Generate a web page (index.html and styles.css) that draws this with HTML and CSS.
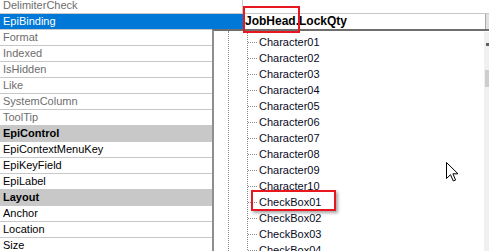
FILE: index.html
```html
<!DOCTYPE html>
<html lang="en">
<head>
    <meta charset="UTF-8">
    <title>Property Grid - EpiBinding</title>
    <link rel="stylesheet" href="styles.css">
</head>
<body>
    <div class="screen">
        <div class="grid">
            <div class="row dim"><div class="name">DelimiterCheck</div><div class="value"></div></div>
            <div class="row selected">
                <div class="name">EpiBinding</div>
                <div class="value edit"><span class="edit-text">JobHead.LockQty</span><span class="drop-btn"></span></div>
            </div>
            <div class="row dim"><div class="name">Format</div><div class="value"></div></div>
            <div class="row dim"><div class="name">Indexed</div><div class="value"></div></div>
            <div class="row dim"><div class="name">IsHidden</div><div class="value"></div></div>
            <div class="row dim"><div class="name">Like</div><div class="value"></div></div>
            <div class="row dim"><div class="name">SystemColumn</div><div class="value"></div></div>
            <div class="row dim"><div class="name">ToolTip</div><div class="value"></div></div>
            <div class="row category">EpiControl</div>
            <div class="row"><div class="name">EpiContextMenuKey</div><div class="value"></div></div>
            <div class="row"><div class="name">EpiKeyField</div><div class="value"></div></div>
            <div class="row"><div class="name">EpiLabel</div><div class="value"></div></div>
            <div class="row category">Layout</div>
            <div class="row"><div class="name">Anchor</div><div class="value"></div></div>
            <div class="row"><div class="name">Location</div><div class="value"></div></div>
            <div class="row"><div class="name">Size</div><div class="value"></div></div>
        </div>

        <!-- dropdown tree of the binding editor -->
        <div class="popup">
            <div class="tree">
                <div class="branch">
                    <div class="node">Character01</div>
                    <div class="node">Character02</div>
                    <div class="node">Character03</div>
                    <div class="node">Character04</div>
                    <div class="node">Character05</div>
                    <div class="node">Character06</div>
                    <div class="node">Character07</div>
                    <div class="node">Character08</div>
                    <div class="node">Character09</div>
                    <div class="node">Character10</div>
                    <div class="node">CheckBox01</div>
                    <div class="node">CheckBox02</div>
                    <div class="node">CheckBox03</div>
                    <div class="node">CheckBox04</div>
                </div>
            </div>
            <div class="scrollbar">
                <span class="scroll-arrow"></span>
                <span class="scroll-thumb"></span>
            </div>
        </div>

        <div class="mark mark-table"></div>
        <div class="mark mark-field"></div>

        <svg class="cursor" width="13" height="20" viewBox="0 0 13 20">
            <path d="M0.5 0.5 V16.5 L4.5 12.7 L7.3 19 L9.6 18 L6.9 11.8 H12 Z" fill="#fff" stroke="#000" stroke-width="1" stroke-linejoin="miter"/>
        </svg>
    </div>
</body>
</html>
```

FILE: styles.css
```css
body {
    margin: 0;
    background: #fff;
    font-family: "Liberation Sans", Arial, sans-serif;
    font-size: 11px;
}
.screen {
    position: relative;
    width: 489px;
    height: 251px;
    overflow: hidden;
}
.grid {
    margin-top: -2px;
}
.row {
    display: flex;
    height: 15px;
    line-height: 15px;
    border-bottom: 1px solid #c8c8c8;
    color: #000;
}
.row.dim {
    color: #6d6d6d;
}
.name {
    width: 239px;
    padding-left: 3px;
    border-right: 1px solid #c8c8c8;
    white-space: nowrap;
}
.value {
    flex: 1;
}
.category {
    background-color: #c8c8c8;
    font-weight: bold;
    padding-left: 3px;
}
.selected .name {
    background-color: #0078d7;
    color: #fff;
    border-right-color: #0078d7;
}
.edit {
    display: flex;
    color: #000;
}
.edit-text {
    flex: 1;
    padding-left: 2px;
    font-weight: bold;
    font-size: 12px;
    border-right: 1px solid #a8a8a8;
}
.drop-btn {
    width: 3px;
    background-color: #e1e1e1;
}
.popup {
    position: absolute;
    left: 212px;
    top: 29px;
    width: 289px;
    height: 240px;
    background: #fff;
    border-top: 2px solid #6e6e6e;
    border-left: 2px solid #8f8f8f;
}
.tree {
    margin-left: 14px;
    height: 100%;
    border-left: 1px dotted #8a8a8a;
}
.branch {
    margin-left: 18px;
    padding-top: 3px;
    height: 100%;
    border-left: 1px dotted #8a8a8a;
}
.node {
    position: relative;
    height: 16px;
    line-height: 16px;
    padding-left: 11px;
    color: #0a0a1e;
    white-space: nowrap;
}
.node::before {
    content: "";
    position: absolute;
    left: 0;
    top: 8px;
    width: 9px;
    border-top: 1px dotted #8a8a8a;
}
.scrollbar {
    position: absolute;
    left: 270px;
    top: 1px;
    width: 17px;
    height: 100%;
    background-color: #f0f0f0;
}
.scroll-arrow {
    position: absolute;
    left: 2px;
    top: 11px;
    width: 3px;
    height: 3px;
    background-color: #606060;
}
.scroll-thumb {
    position: absolute;
    left: 1px;
    top: 38px;
    width: 15px;
    height: 17px;
    background-color: #cdcdcd;
}
.mark {
    position: absolute;
    border: 2px solid #e8161e;
}
.mark-table {
    left: 243px;
    top: 6px;
    width: 53px;
    height: 23px;
}
.mark-field {
    left: 251px;
    top: 190px;
    width: 81px;
    height: 17px;
    box-shadow: 2px 2px 3px rgba(0, 0, 0, 0.35);
}
.cursor {
    position: absolute;
    left: 446px;
    top: 162px;
}
```
